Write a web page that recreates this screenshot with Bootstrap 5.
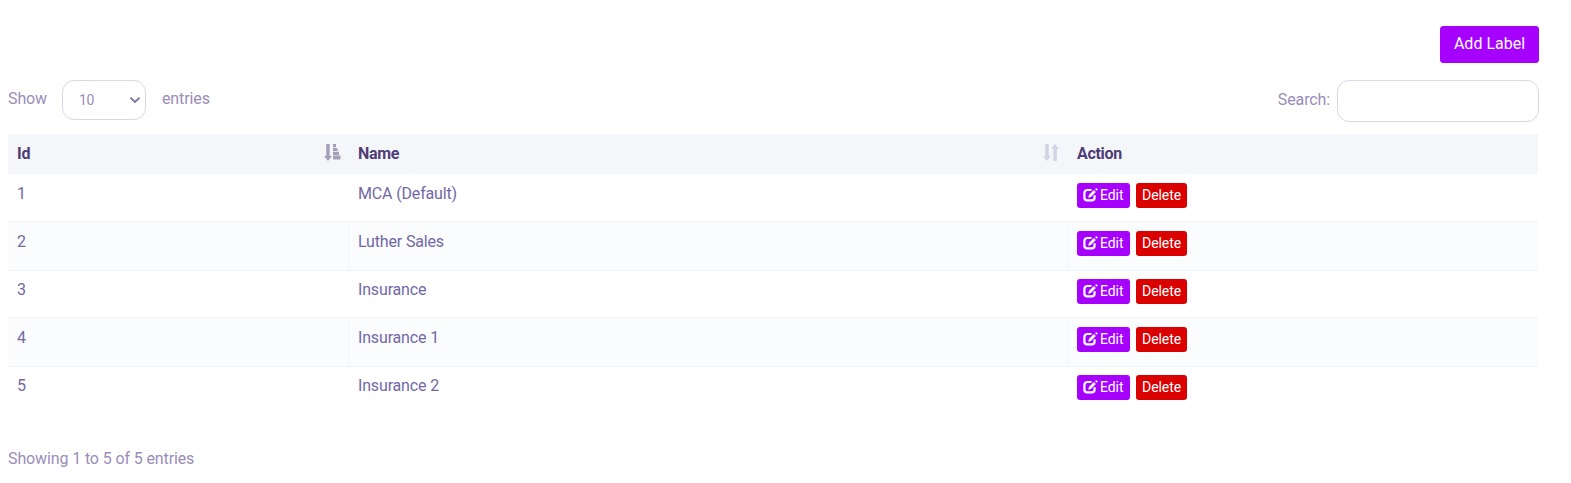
<!DOCTYPE html>
<html lang="en">
<head>
<meta charset="utf-8">
<meta name="viewport" content="width=device-width, initial-scale=1">
<title>Labels</title>
<link href="https://cdn.jsdelivr.net/npm/bootstrap@5.3.0/dist/css/bootstrap.min.css" rel="stylesheet">
<style>
body{font-family:Roboto,"Liberation Sans",sans-serif;font-size:16px;line-height:24px;letter-spacing:-.12px;color:#9a8dba;background:#fff}
.page{padding:26px 32px 0 8px}
.btn-purple{--bs-btn-color:#fff;--bs-btn-bg:#a600ff;--bs-btn-border-color:#a600ff;--bs-btn-hover-color:#fff;--bs-btn-hover-bg:#9300e3}
.btn-red{--bs-btn-color:#fff;--bs-btn-bg:#db0000;--bs-btn-border-color:#db0000;--bs-btn-hover-color:#fff;--bs-btn-hover-bg:#bd0000}
.btn-add{width:99px;height:37px;padding:4px 0 6px;border-radius:3px;line-height:24px}
.tools{height:42px;margin-top:17px}
.length-select{width:84px;height:40px;border:1px solid #d9d7e6;border-radius:12px;padding:0 4px 0 16px;font-size:14px;letter-spacing:-.4px}
.search-box{width:202px;height:42px;border:1px solid #d9d7e6;border-radius:12px;box-shadow:none}
.labels{width:1530px;margin:12px 0 0;table-layout:fixed;border-collapse:separate;border-spacing:0}
.labels th,.labels td{border:0;vertical-align:top;color:#7268a6}
.labels th{height:40px;padding:8px 9px;background:#f5f6fa;color:#4d3d75;font-weight:700;letter-spacing:-.3px}
.labels td{height:48px;padding:8px 9px 0;letter-spacing:-.16px}
.labels tr:nth-child(even) td{background:#fbfcfe;box-shadow:0 -1px #f3f3f7,0 1px #f3f3f7}
.labels td+td{border-left:2px solid transparent;padding-left:8px}
.labels tr:nth-child(even) td+td{border-left-color:#f8f8fb}
.labels th+th{padding-left:10px}
.btn-row{height:25px;padding:0 6px 1px;border:0;border-radius:3px;font-size:14px;line-height:24px;letter-spacing:-.05px}
.btn-edit{width:53px}.btn-delete{width:51px}
.info{margin-top:33px}
</style>
</head>
<body>
<svg class="d-none">
  <symbol id="edit" viewBox="0 0 15 14">
    <path d="M8.5 2H4.4A3 3 0 0 0 1.4 5v4.6a2.8 2.8 0 0 0 2.8 2.8h4.6a2.8 2.8 0 0 0 2.8-2.8V7.2" fill="none" stroke="currentColor" stroke-width="2.2"/>
    <path d="M5.2 9.8l.7-2.8 5-5 2 2-5 5zM12 1.2l.8-.8q.5-.4.9 0l.7.7q.5.5 0 .9l-.8.8z" fill="currentColor"/>
  </symbol>
</svg>
<main class="page">
  <div class="d-flex justify-content-end"><button class="btn btn-purple btn-add">Add Label</button></div>
  <div class="tools d-flex justify-content-between align-items-start">
    <div class="d-flex align-items-center">
      <span style="width:54px;margin-top:-3px">Show</span>
      <div class="length-select d-flex align-items-center justify-content-between" role="combobox" aria-label="Entries">
        <span style="margin-top:-1px">10</span>
        <svg width="12" height="8" viewBox="0 0 12 8"><path d="M1.5 1.8L6 6l4.5-4.2" fill="none" stroke="#8377a8" stroke-width="2"/></svg>
      </div>
      <span class="ms-3" style="margin-top:-3px">entries</span>
    </div>
    <label class="d-flex align-items-center"><span style="margin:-3px 7px 0 0">Search:</span><input class="form-control search-box" type="search"></label>
  </div>
  <table class="labels table">
    <colgroup><col style="width:340px"><col style="width:719px"><col></colgroup>
    <thead><tr>
      <th><div class="d-flex justify-content-between"><span>Id</span><svg width="17" height="18" viewBox="0 0 17 18" fill="#a59fb9" style="margin:2px -2px 0 0"><path d="M2.2 0h3.5v12H8L4 17 0 12h2.2zM9 0h3v3.3H9zm0 4h4.5v3H9zm0 3.7h6v3.2H9zm0 3.9h7.5v4H9z"/></svg></div></th>
      <th><div class="d-flex justify-content-between"><span>Name</span><svg width="16" height="18" viewBox="0 0 16 18" fill="#d5d3e3" style="margin:2px -1px 0 0"><path d="M2.2 0h3.5v12H8L4 17 0 12h2.2zM10.3 17h3.5V5H16l-4-5-4 5h2.3z"/></svg></div></th>
      <th>Action</th>
    </tr></thead>
    <tbody id="rows"></tbody>
  </table>
  <div class="info">Showing 1 to 5 of 5 entries</div>
</main>
<script src="https://cdn.jsdelivr.net/npm/bootstrap@5.3.0/dist/js/bootstrap.bundle.min.js"></script>
<script>
document.getElementById('rows').innerHTML = ['MCA (Default)','Luther Sales','Insurance','Insurance 1','Insurance 2'].map((name, i) => `
<tr><td>${i + 1}</td><td>${name}</td><td><div class="d-flex" style="gap:6px;padding-top:1px">
<button class="btn btn-purple btn-row btn-edit d-flex align-items-center"><svg width="15" height="14" class="flex-shrink-0" style="margin-right:2px"><use href="#edit"/></svg>Edit</button>
<button class="btn btn-red btn-row btn-delete">Delete</button></div></td></tr>`).join('');
</script>
</body>
</html>
